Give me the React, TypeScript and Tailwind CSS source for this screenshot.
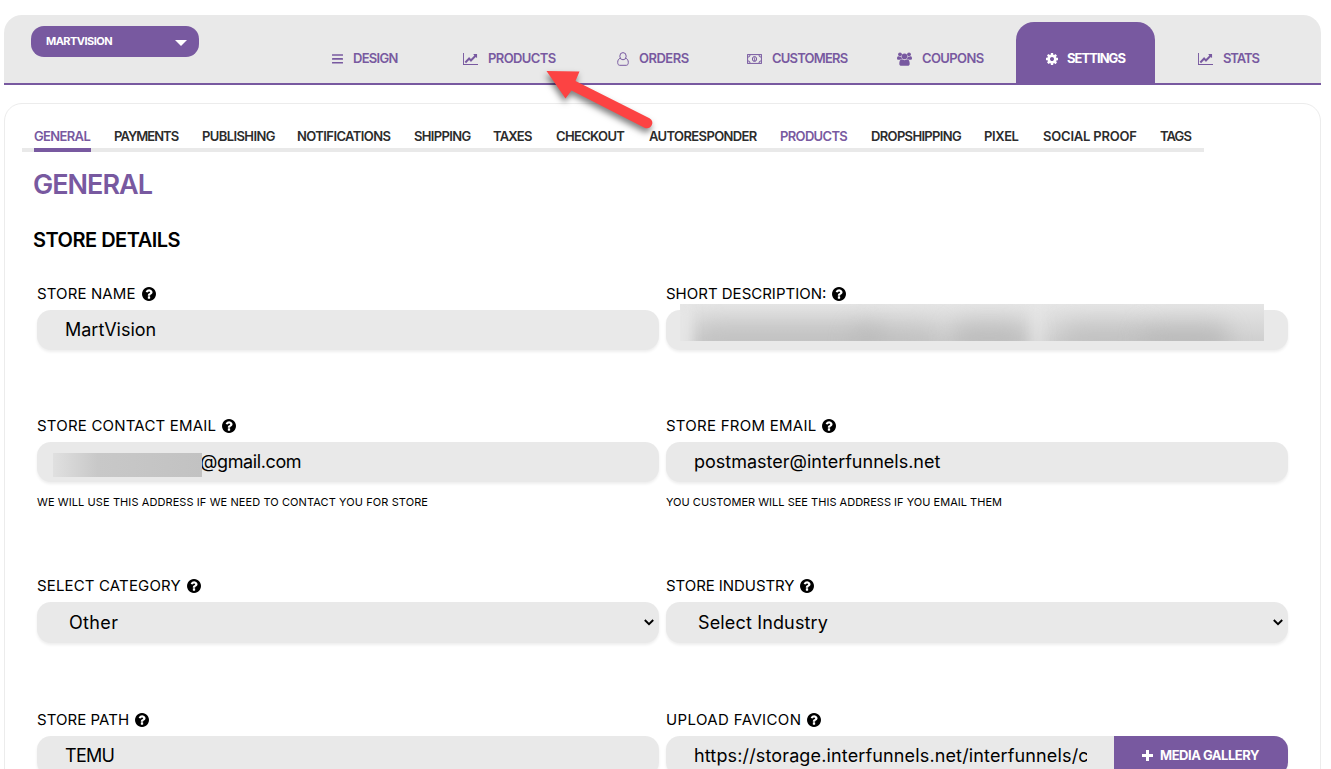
import type { ReactNode } from "react";

const COG =
  "M1152 896q0-106-75-181t-181-75-181 75-75 181 75 181 181 75 181-75 75-181zm512-109v222q0 12-8 23t-20 13l-185 28q-19 54-39 91 35 50 107 138 10 12 10 25t-9 23q-27 37-99 108t-94 71q-12 0-26-9l-138-108q-44 23-91 38-16 136-29 186-7 28-36 28h-222q-14 0-24.500-8.500t-11.500-21.500l-28-184q-49-16-90-37l-141 107q-10 9-25 9-14 0-25-11-126-114-165-168-7-10-7-23 0-12 8-23 15-21 51-66.500t54-70.500q-27-50-41-99l-183-27q-13-2-21-12.500t-8-23.500v-222q0-12 8-23t19-13l186-28q14-46 39-92-40-57-107-138-10-12-10-24 0-10 9-23 26-36 98.500-107.500t94.500-71.500q13 0 26 10l138 107q44-23 91-38 16-136 29-186 7-28 36-28h222q14 0 24.500 8.500t11.500 21.500l28 184q49 16 90 37l142-107q9-9 24-9 13 0 25 10 129 119 165 170 7 8 7 22 0 12-8 23-15 21-51 66.500t-54 70.500q26 50 41 98l183 28q13 2 21 12.500t8 23.500z";
const QUESTION =
  "M1024 1376v-192q0-14-9-23t-23-9h-192q-14 0-23 9t-9 23v192q0 14 9 23t23 9h192q14 0 23-9t9-23zm256-672q0-88-55.500-163t-138.500-116-170-41q-243 0-371 213-15 24 8 42l132 100q7 6 19 6 16 0 25-12 53-68 86-92 34-24 86-24 48 0 85.500 26t37.500 59q0 38-20 61t-68 45q-63 28-115.500 86.500t-52.500 125.500v36q0 14 9 23t23 9h192q14 0 23-9t9-23q0-19 21.500-49.500t54.500-49.500q32-18 49-28.500t46-35 44.500-48 28-60.500 12.500-81zm384 192q0 209-103 385.500t-279.500 279.500-385.500 103-385.500-103-279.500-279.500-103-385.500 103-385.500 279.500-279.500 385.500-103 385.500 103 279.500 279.500 103 385.500z";
const CHART =
  "M2048 1536v128h-2048v-1536h128v1408h1920zM1920 288v435q0 21-19.5 29.5t-35.5-7.5l-121-121-633 633q-10 10-23 10t-23-10l-233-233-416 416-192-192 585-585q10-10 23-10t23 10l233 233 464-464-121-121q-16-16-7.5-35.5t29.5-19.5h435q14 0 23 9t9 23z";

const BarsIcon = () => (
  <svg className="h-[10px] w-[11px]" viewBox="0 0 11 10" fill="currentColor">
    <rect y="0.2" width="11" height="1.6" rx="0.3" />
    <rect y="4.1" width="11" height="1.6" rx="0.3" />
    <rect y="8" width="11" height="1.6" rx="0.3" />
  </svg>
);
const ChartIcon = () => (
  <svg className="h-[12px] w-[15px]" viewBox="0 128 2048 1536" preserveAspectRatio="none" fill="currentColor">
    <path d={CHART} />
  </svg>
);
const UserIcon = () => (
  <svg className="h-[14px] w-[12px]" viewBox="0 0 12 14" fill="none" stroke="currentColor">
    <ellipse cx="6" cy="4.2" rx="3.2" ry="3.6" />
    <path d="M3.2 6.3C1.6 6.700.7 8.300.7 10.400c0 1.900.7 2.900 2 2.900h6.600c1.300 0 2-1 2-2.900 0-2.100-.9-3.700-2.500-4.100" />
  </svg>
);
const MoneyIcon = () => (
  <svg className="h-[10px] w-[15px]" viewBox="0 0 15 10" fill="none" stroke="currentColor">
    <rect x="0.6" y="0.6" width="13.8" height="8.800" />
    <path d="M1 3.100A2 2 0 0 0 3 1M12 1a2 2 0 0 0 2 2.100M1 6.900A2 2 0 0 1 3 9M12 9a2 2 0 0 1 2-2.100" />
    <ellipse cx="7.500" cy="5" rx="2.100" ry="2.500" />
    <path d="M6.800 4.100l.8-.5v2.900M6.600 6.400h1.900" strokeWidth="0.800" />
  </svg>
);
const UsersIcon = () => (
  <svg className="h-[14px] w-[15px]" viewBox="0 0 15 14" fill="currentColor">
    <circle cx="3" cy="2.300" r="1.900" />
    <circle cx="12" cy="2.300" r="1.900" />
    <circle cx="7.500" cy="4.400" r="2.800" />
    <path d="M1.500 4.300c.8.600 2 .6 2.800.2 0 1 .3 1.700.8 2.400-.8 0-1.500.3-2 .9H1.500C.6 7.800 0 7.300 0 6.500c0-1.100.4-2.400 1.500-2.200zM13.500 4.300c-.8.600-2 .6-2.800.2 0 1-.3 1.700-.8 2.400.8 0 1.500.3 2 .9h1.600c.9 0 1.500-.5 1.500-1.300 0-1.100-.4-2.400-1.500-2.200z" />
    <path d="M4.800 7.300c1.600 1.100 3.800 1.100 5.400 0 1.700.1 2.500 2 2.500 4.400 0 1.400-.8 2-2 2H4.300c-1.200 0-2-.6-2-2 0-2.400.8-4.300 2.500-4.400z" />
  </svg>
);
const CogIcon = () => (
  <svg className="h-[12px] w-[12px]" viewBox="128 128 1536 1536" fill="currentColor">
    <path d={COG} />
  </svg>
);
const Help = () => (
  <svg className="-mt-px h-[14px] w-[14px] shrink-0" viewBox="128 128 1536 1536">
    <path d={QUESTION} />
  </svg>
);
const Chevron = () => (
  <svg className="h-[7px] w-[10px]" viewBox="0 0 10 7" fill="none" stroke="#000" strokeWidth="1.900">
    <path d="M0.800 1l4.200 4.200L9.200 1" />
  </svg>
);

const NAV: { label: string; icon: ReactNode; slot: string; tracking: string }[] = [
  { label: "DESIGN", icon: <BarsIcon />, slot: "w-[131px]", tracking: "tracking-[-0.700px]" },
  { label: "PRODUCTS", icon: <ChartIcon />, slot: "w-[154px]", tracking: "tracking-[-0.600px]" },
  { label: "ORDERS", icon: <UserIcon />, slot: "w-[130px]", tracking: "tracking-[-0.500px]" },
  { label: "CUSTOMERS", icon: <MoneyIcon />, slot: "w-[150px]", tracking: "tracking-[-0.800px]" },
  { label: "COUPONS", icon: <UsersIcon />, slot: "w-[118px]", tracking: "tracking-[-0.600px]" },
];

const TABS: [string, string][] = [
  ["GENERAL", "w-[80px] tracking-[-0.650px]"],
  ["PAYMENTS", "w-[88px] tracking-[-0.950px]"],
  ["PUBLISHING", "w-[95px] tracking-[-0.600px]"],
  ["NOTIFICATIONS", "w-[117px] tracking-[-0.580px]"],
  ["SHIPPING", "w-[79px] tracking-[-0.640px]"],
  ["TAXES", "w-[63px] tracking-[-0.800px]"],
  ["CHECKOUT", "w-[93px] tracking-[-0.660px]"],
  ["AUTORESPONDER", "w-[131px] tracking-[-0.620px]"],
  ["PRODUCTS", "w-[91px] tracking-[-0.660px]"],
  ["DROPSHIPPING", "w-[113px] tracking-[-0.660px]"],
  ["PIXEL", "w-[59px] tracking-[-0.400px]"],
  ["SOCIAL PROOF", "w-[117px] tracking-[-0.200px]"],
  ["TAGS", "w-[43px] tracking-[-0.900px]"],
];

function Field({
  label,
  tracking = "",
  height = "h-10",
  pad = "pl-7",
  note,
  noteTracking = "",
  children,
}: {
  label: string;
  tracking?: string;
  height?: string;
  pad?: string;
  note?: string;
  noteTracking?: string;
  children?: ReactNode;
}) {
  return (
    <div className="w-[622px]">
      <div className="flex h-8 items-center gap-[6px] text-[15px] text-black">
        <span className={`whitespace-nowrap ${tracking}`}>{label}</span>
        <Help />
      </div>
      <div
        className={`relative flex items-center rounded-[14px] bg-[#e9e9e9] text-[18px] text-black shadow-[0_2px_3px_rgba(0,0,0,0.07)] ${height} ${pad}`}
      >
        {children}
      </div>
      {note && (
        <div className={`mt-[12px] whitespace-nowrap text-[11px] leading-4 text-black ${noteTracking}`}>{note}</div>
      )}
    </div>
  );
}

export default function App() {
  return (
    <div className="relative h-[769px] w-[1331px] overflow-hidden bg-white pl-1 pt-[15px] font-['Inter',sans-serif]">
      <header className="flex h-[70px] w-[1317px] rounded-t-[18px] border-b-2 border-[#7859a0] bg-[#e9e9e9] pl-[27px]">
        <button className="mt-[11px] flex h-[31px] w-[168px] items-center justify-between rounded-[13px] bg-[#7859a0] pl-[15px] pr-[12px] text-[11px] font-bold tracking-[-0.550px] text-white">
          <span className="pb-[1px]">MARTVISION</span>
          <svg className="mt-[3px] h-[6px] w-[12px]" viewBox="0 0 12 6" fill="currentColor">
            <path d="M0 0h12L6 6z" />
          </svg>
        </button>
        <nav className="ml-[133px] flex text-[13px] font-semibold text-[#7859a0]">
          {NAV.map((n) => (
            <a key={n.label} className={`flex h-[68px] items-center gap-[10px] pt-[19px] ${n.slot} ${n.tracking}`}>
              {n.icon}
              <span>{n.label}</span>
            </a>
          ))}
          <a className="mt-[7px] ml-px flex h-[61px] w-[139px] items-center gap-[9px] rounded-t-[18px] bg-[#7859a0] pl-[30px] pt-[12px] font-bold tracking-[-0.950px] text-white">
            <CogIcon />
            <span>SETTINGS</span>
          </a>
          <a className="ml-[43px] flex h-[68px] items-center gap-[10px] pt-[19px] tracking-[-1.100px]">
            <ChartIcon />
            <span>STATS</span>
          </a>
        </nav>
      </header>

      <main className="mt-[18px] h-[700px] w-[1317px] rounded-t-[18px] border border-[#ececec] pl-[17px] pt-[24px]">
        <div className="flex h-6 w-[1182px] border-b-4 border-[#e9e9e9] pl-3 text-[13px] font-semibold leading-[17px] text-[#2c2c2c]">
          {TABS.map(([t, w], i) => (
            <div key={t} className={`h-6 shrink-0 whitespace-nowrap ${w}`}>
              <div
                className={
                  i === 0
                    ? "h-6 w-[57px] border-b-4 border-[#7859a0] text-[#7859a0]"
                    : t === "PRODUCTS"
                      ? "text-[#7859a0]"
                      : ""
                }
              >
                {t}
              </div>
            </div>
          ))}
        </div>

        <h1 className="ml-[11px] mt-[15px] text-[27px] font-semibold leading-9 tracking-[-1px] text-[#7859a0]">
          GENERAL
        </h1>
        <h2 className="ml-[11px] mt-[23px] text-[20px] font-semibold leading-7 tracking-[-0.500px] text-black">
          STORE DETAILS
        </h2>

        <div className="ml-[15px] mt-[24px] grid w-[1251px] grid-cols-[622px_622px] grid-rows-[132px_160px_134px_132px] gap-x-[7px]">
          <Field label="STORE NAME" tracking="tracking-[0.120px]">
            <span className="-mt-[2px]">MartVision</span>
          </Field>
          <Field label="SHORT DESCRIPTION:">
            <div className="absolute left-[14px] top-[-6px] h-[37px] w-[584px] overflow-hidden bg-gradient-to-b from-[#e5e5e5] to-[#cfcfcf]">
              <div className="absolute left-[15px] top-[18px] h-8 w-[190px] rounded-full bg-[#b4b4b4] opacity-50 blur-[11px]" />
              <div className="absolute left-[170px] top-[20px] h-8 w-[90px] rounded-full bg-[#b4b4b4] opacity-50 blur-[11px]" />
              <div className="absolute left-[270px] top-[18px] h-8 w-[78px] rounded-full bg-[#b0b0b0] opacity-60 blur-[11px]" />
              <div className="absolute left-[380px] top-[19px] h-8 w-[90px] rounded-full bg-[#b8b8b8] opacity-60 blur-[11px]" />
              <div className="absolute left-[460px] top-[19px] h-8 w-[90px] rounded-full bg-[#acacac] opacity-60 blur-[11px]" />
              <div className="absolute left-[-12px] top-0 h-12 w-6 bg-[#e6e6e6] blur-[6px]" />
              <div className="absolute left-[350px] top-0 h-12 w-4 bg-[#e8e8e8] opacity-60 blur-[6px]" />
            </div>
          </Field>

          <Field
            label="STORE CONTACT EMAIL"
            tracking="tracking-[0.200px]"
            pad="pl-4"
            note="WE WILL USE THIS ADDRESS IF WE NEED TO CONTACT YOU FOR STORE"
            noteTracking="tracking-[0.090px]"
          >
            <div className="z-10 mt-[5px] h-6 w-[149px] bg-gradient-to-r from-[#e0e0e0] via-[#c8c8c8] via-30% to-[#c2c2c2]" />
            <span className="-ml-[2px] -mt-[2px] tracking-[-0.380px]">@gmail.com</span>
          </Field>
          <Field
            label="STORE FROM EMAIL"
            tracking="tracking-[0.250px]"
            note="YOU CUSTOMER WILL SEE THIS ADDRESS IF YOU EMAIL THEM"
            noteTracking="tracking-[0.020px]"
          >
            <span className="-mt-[2px]">postmaster@interfunnels.net</span>
          </Field>

          <Field label="SELECT CATEGORY" tracking="tracking-[0.150px]" height="h-[41px]" pad="pl-8 pr-[5px]">
            <span className="flex-1 tracking-[0.350px]">Other</span>
            <Chevron />
          </Field>
          <Field label="STORE INDUSTRY" tracking="tracking-[-0.060px]" height="h-[41px]" pad="pl-8 pr-[5px]">
            <span className="flex-1 tracking-[0.150px]">Select Industry</span>
            <Chevron />
          </Field>

          <Field label="STORE PATH" tracking="tracking-[0.060px]">
            <span className="-mt-[2px] tracking-[-0.700px]">TEMU</span>
          </Field>
          <Field label="UPLOAD FAVICON" tracking="tracking-[0.380px]">
            <span className="-mt-[2px] w-[393px] overflow-hidden whitespace-nowrap tracking-[0.140px]">
              https://storage.interfunnels.net/interfunnels/c
            </span>
            <button className="ml-[27px] flex h-10 flex-1 items-center gap-[7px] rounded-r-[14px] bg-[#7859a0] pb-px pl-[28px] text-[13px] font-bold tracking-[-0.480px] text-white">
              <svg className="h-[11px] w-[11px]" viewBox="0 0 11 11" fill="currentColor">
                <path d="M4 0h3v4h4v3H7v4H4V7H0V4h4z" />
              </svg>
              <span className="whitespace-nowrap">MEDIA GALLERY</span>
            </button>
          </Field>
        </div>
      </main>

      <svg
        className="pointer-events-none absolute left-[535px] top-[60px] h-[85px] w-[130px] drop-shadow-[-1px_4px_3px_rgba(0,0,0,0.5)]"
        viewBox="535 60 130 85"
        fill="#fc4343"
      >
        <path d="M546.500 71L579.500 71.500L575.500 81L649.500 118.200C652.500 120 653 122.500 651.800 125C650.300 128 647.500 129 644.500 127.700L571.500 90.500L565.500 98.500Z" />
      </svg>
    </div>
  );
}
